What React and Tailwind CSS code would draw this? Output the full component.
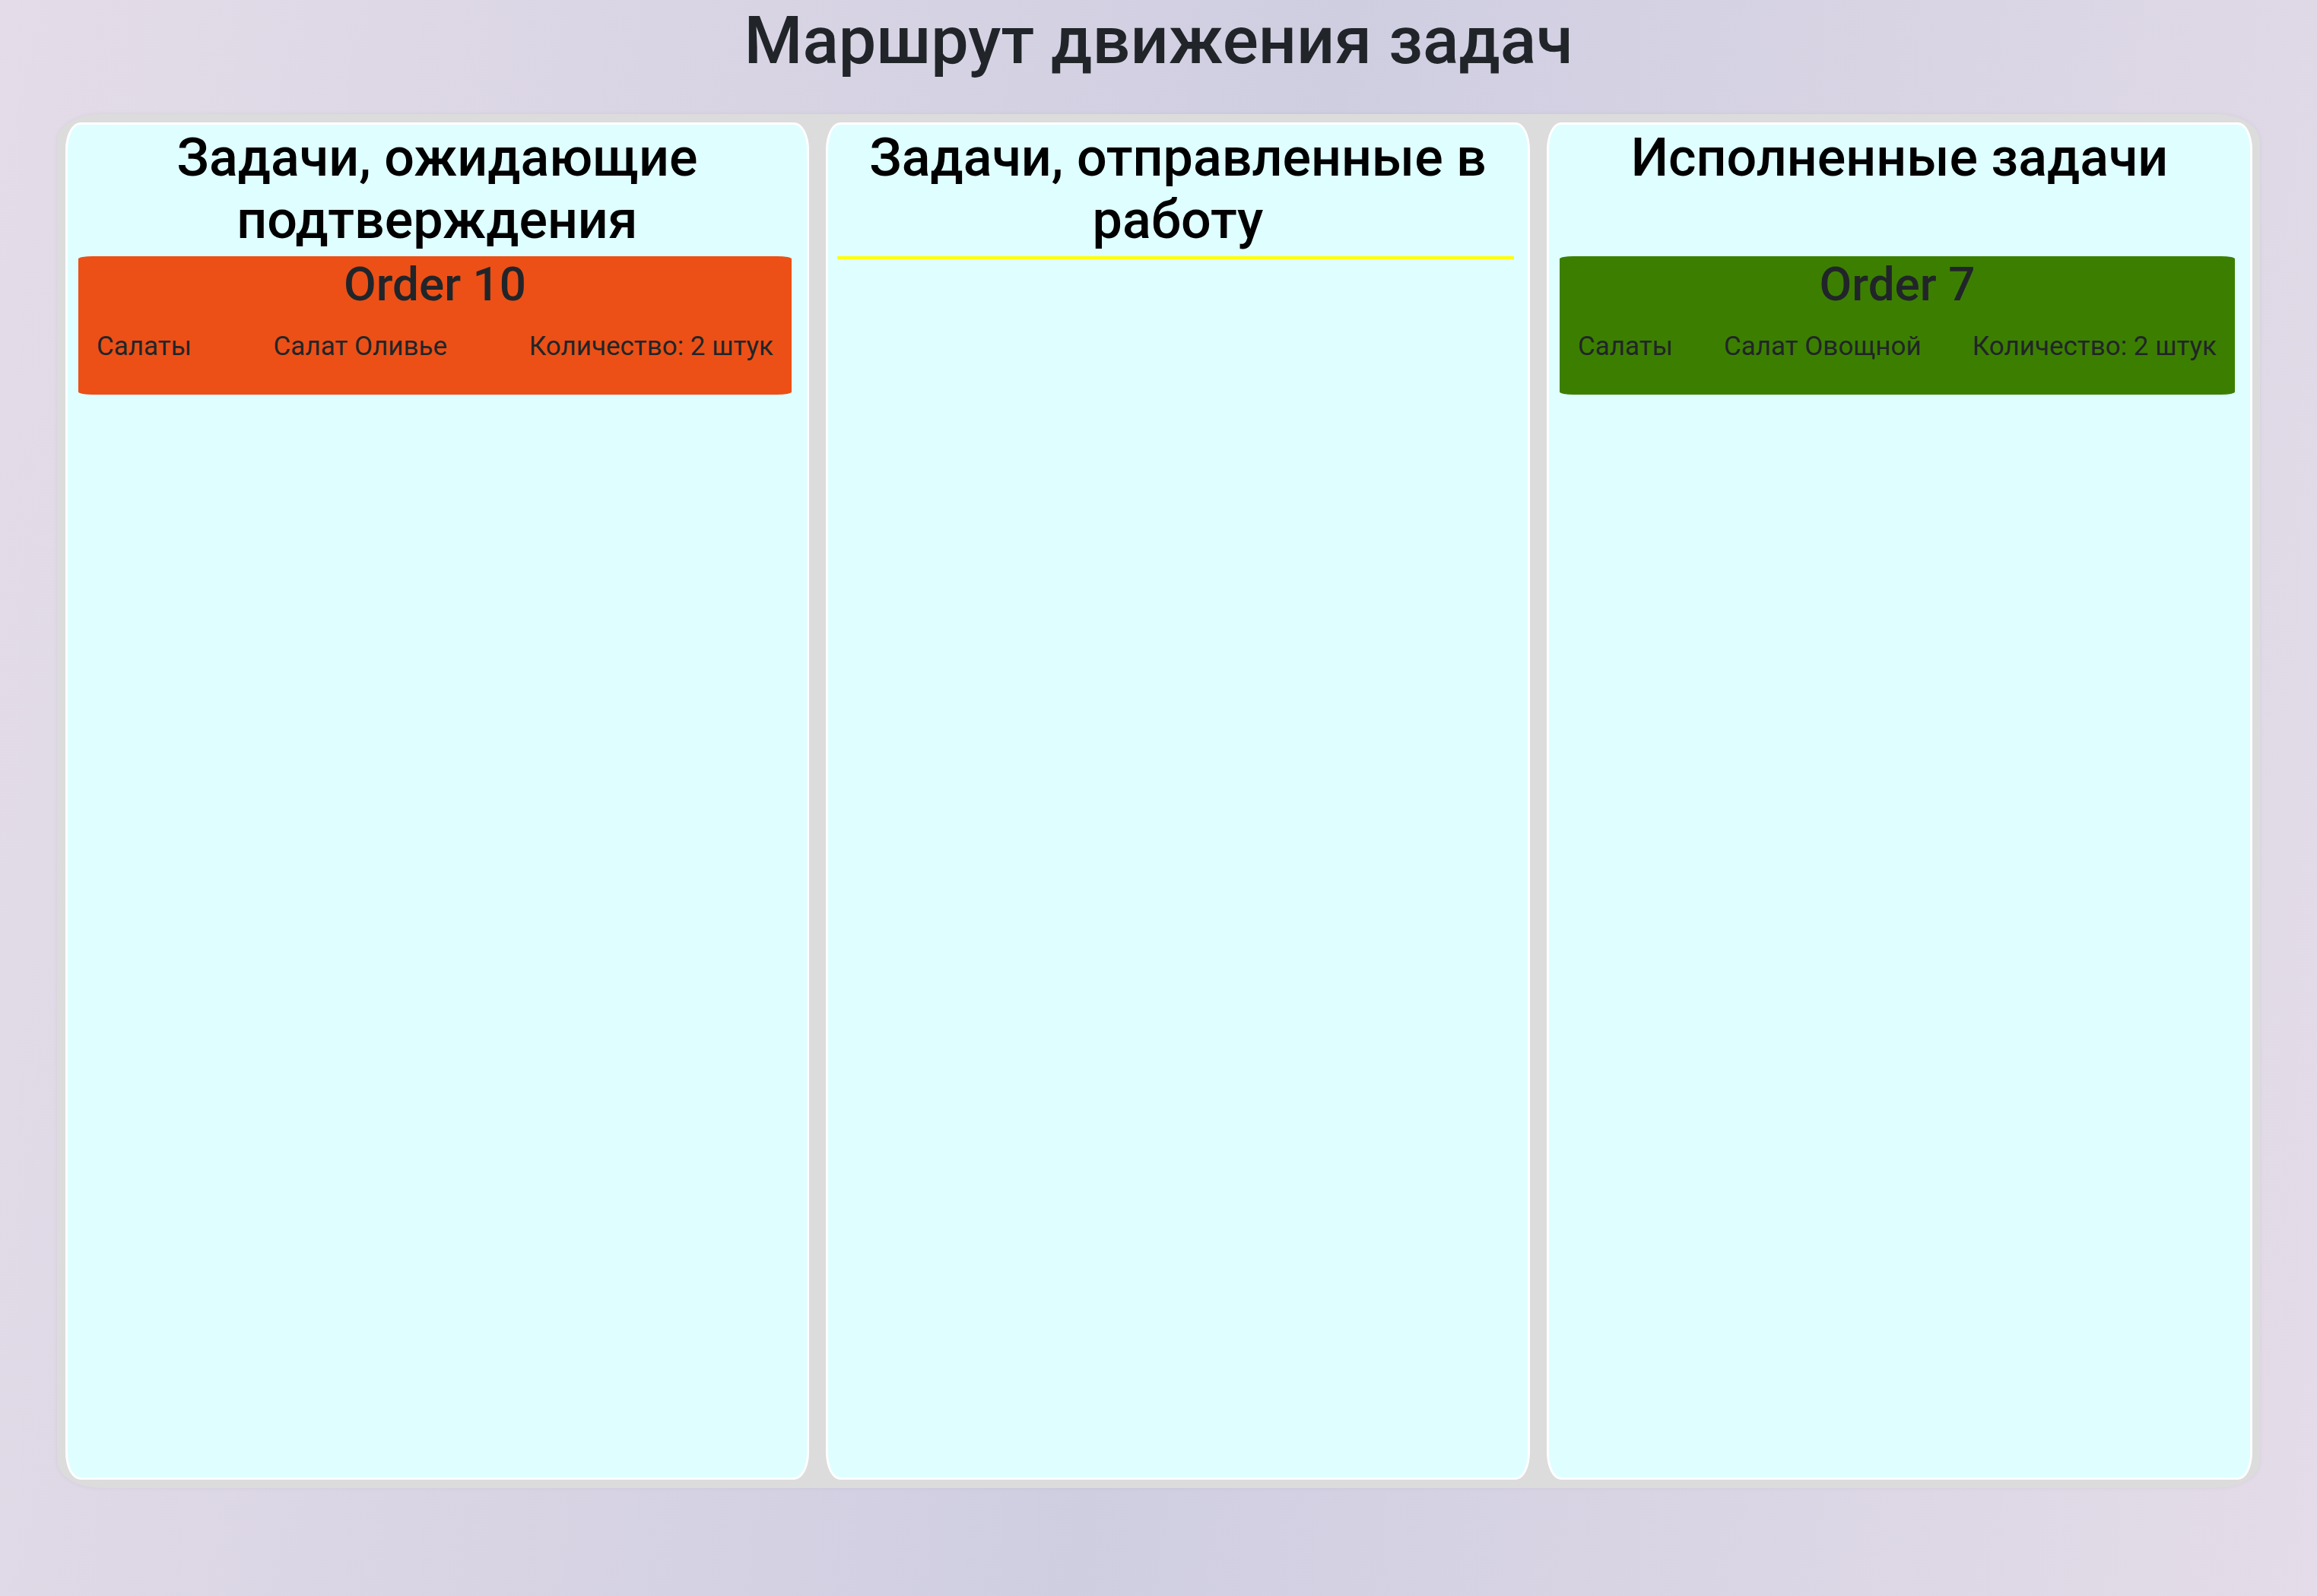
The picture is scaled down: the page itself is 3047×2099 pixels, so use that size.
import React from "react";

function Card({ color, title, items }) {
  return (
    <div className={`ml-[14px] mr-[20px] h-[182px] rounded-[2%] ${color} text-[#212529]`}>
      <h3 className="text-center text-[62px] font-medium leading-[1.2]">{title}</h3>
      <div className="mt-[19px] flex items-center justify-between px-[24px] text-[35px] leading-[1.5]">
        {items.map((t) => (
          <span key={t}>{t}</span>
        ))}
      </div>
    </div>
  );
}

function Panel({ width, title, children }) {
  return (
    <div className={`${width} flex h-full flex-col rounded-[2%] border-[3px] border-white bg-[#dffeff]`}>
      <div className="h-[173px] shrink-0 pt-[2px]">
        <h2 className="px-[12px] text-center text-[70px] font-medium leading-[82px] text-black">{title}</h2>
      </div>
      {children}
    </div>
  );
}

export default function App() {
  return (
    <div className="min-h-screen w-full bg-[linear-gradient(100deg,#e4dce8_0%,#cfcee1_52%,#e4dce8_100%)] font-['Roboto',sans-serif]">
      <h1 className="text-center text-[88px] font-medium leading-[1.2] text-[#212529]">
        Маршрут движения задач
      </h1>
      <div className="mx-[75px] mt-[44px] flex h-[1807px] gap-[22px] rounded-[2%] bg-[#dcdcdc] py-[11px] pl-[11px] pr-[9px] shadow-[0_0_6px_rgba(0,0,0,0.05)]">
        <Panel width="w-[978px]" title="Задачи, ожидающие подтверждения">
          <Card
            color="bg-[#ec5016]"
            title="Order 10"
            items={["Салаты", "Салат Оливье", "Количество: 2 штук"]}
          />
        </Panel>
        <Panel width="w-[926px]" title="Задачи, отправленные в работу">
          <div className="ml-[12px] mr-[18px] h-[4px] bg-[#ffff00]" />
        </Panel>
        <Panel width="w-[928px]" title="Исполненные задачи">
          <Card
            color="bg-[#3c7f00]"
            title="Order 7"
            items={["Салаты", "Салат Овощной", "Количество: 2 штук"]}
          />
        </Panel>
      </div>
    </div>
  );
}
